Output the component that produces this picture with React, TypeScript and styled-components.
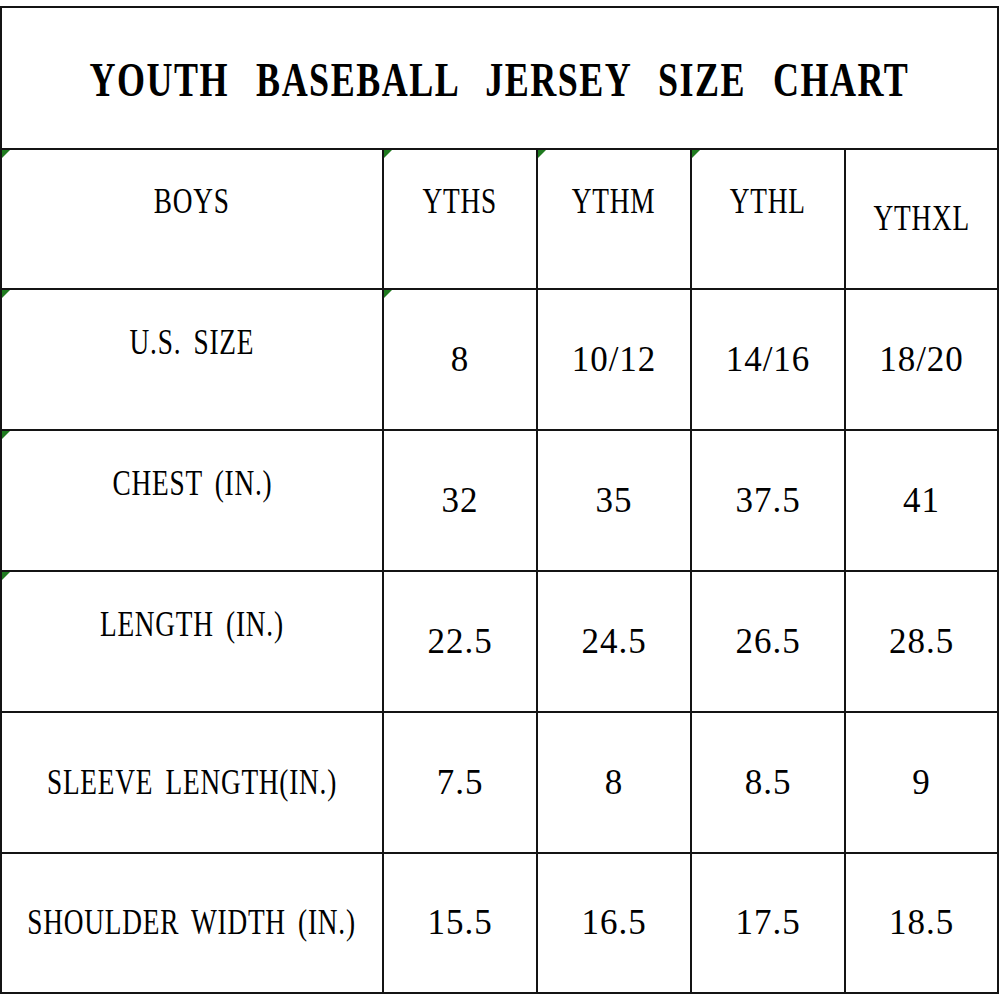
import React from 'react'
import styled, { createGlobalStyle } from 'styled-components'

const Global = createGlobalStyle`
html, body {
    margin: 0;
    padding: 0;
    background: #ffffff;
}
`

interface iRow {
    label: string
    values: string[]
    lift?: boolean
    marks: boolean[]
}

const sizes = ['YTHS', 'YTHM', 'YTHL', 'YTHXL']

const rows: iRow[] = [
    { label: 'U.S. SIZE', values: ['8', '10/12', '14/16', '18/20'], lift: true, marks: [true, true, false, false, false] },
    { label: 'CHEST (IN.)', values: ['32', '35', '37.5', '41'], lift: true, marks: [true, false, false, false, false] },
    { label: 'LENGTH (IN.)', values: ['22.5', '24.5', '26.5', '28.5'], lift: true, marks: [true, false, false, false, false] },
    { label: 'SLEEVE LENGTH(IN.)', values: ['7.5', '8', '8.5', '9'], marks: [false, false, false, false, false] },
    { label: 'SHOULDER WIDTH (IN.)', values: ['15.5', '16.5', '17.5', '18.5'], marks: [false, false, false, false, false] },
]

const App = () => {
    return (
        <Page>
            <Global />
            <Chart>
                <TitleCell>
                    <TitleText>YOUTH BASEBALL JERSEY SIZE CHART</TitleText>
                </TitleCell>

                <Cell $mark>
                    <Label $lift>BOYS</Label>
                </Cell>
                {sizes.map((s, i) => (
                    <Cell key={s} $mark={i < 3}>
                        <Label $lift={i < 3}>{s}</Label>
                    </Cell>
                ))}

                {rows.map((r) => (
                    <React.Fragment key={r.label}>
                        <Cell $mark={r.marks[0]}>
                            <Label $lift={r.lift}>{r.label}</Label>
                        </Cell>
                        {r.values.map((v, i) => (
                            <Cell key={i} $mark={r.marks[i + 1]}>
                                <Value>{v}</Value>
                            </Cell>
                        ))}
                    </React.Fragment>
                ))}
            </Chart>
        </Page>
    )
}

export default App

const Page = styled.div`
width: 1000px;
height: 1000px;
padding-top: 6px;
box-sizing: border-box;
background: #ffffff;
`

const Chart = styled.div`
width: 999px;
display: grid;
grid-template-columns: 380px 152px 152px 152px 151px;
grid-template-rows: 140px 138px 139px 139px 139px 139px 138px;
gap: 2px;
padding: 2px;
box-sizing: border-box;
background: #141414;
`

const Cell = styled.div<{ $mark?: boolean }>`
position: relative;
background: #ffffff;
display: flex;
align-items: center;
justify-content: center;

&::before {
    content: "";
    display: ${({ $mark }) => ($mark ? 'block' : 'none')};
    position: absolute;
    top: 0;
    left: 0;
    width: 8px;
    height: 8px;
    background: #1f7a1f;
    clip-path: polygon(0 0, 100% 0, 0 100%);
}
`

const TitleCell = styled(Cell)`
grid-column: 1 / span 5;
`

const TitleText = styled.span`
display: inline-block;
white-space: nowrap;
font-family: "Liberation Serif", "Times New Roman", serif;
font-weight: bold;
font-size: 48px;
word-spacing: 22px;
letter-spacing: 2px;
color: #000;
transform: scaleX(0.75);
margin-top: 2px;
`

const Label = styled.span<{ $lift?: boolean }>`
display: inline-block;
white-space: nowrap;
font-family: "Liberation Serif", "Times New Roman", serif;
font-size: 35px;
letter-spacing: 1px;
word-spacing: 6px;
color: #000;
transform: scaleX(0.78);
margin-top: ${({ $lift }) => ($lift ? '-34px' : '0')};
`

const Value = styled.span`
display: inline-block;
white-space: nowrap;
font-family: "Liberation Serif", "Times New Roman", serif;
font-size: 35px;
letter-spacing: 1px;
color: #000;
`
